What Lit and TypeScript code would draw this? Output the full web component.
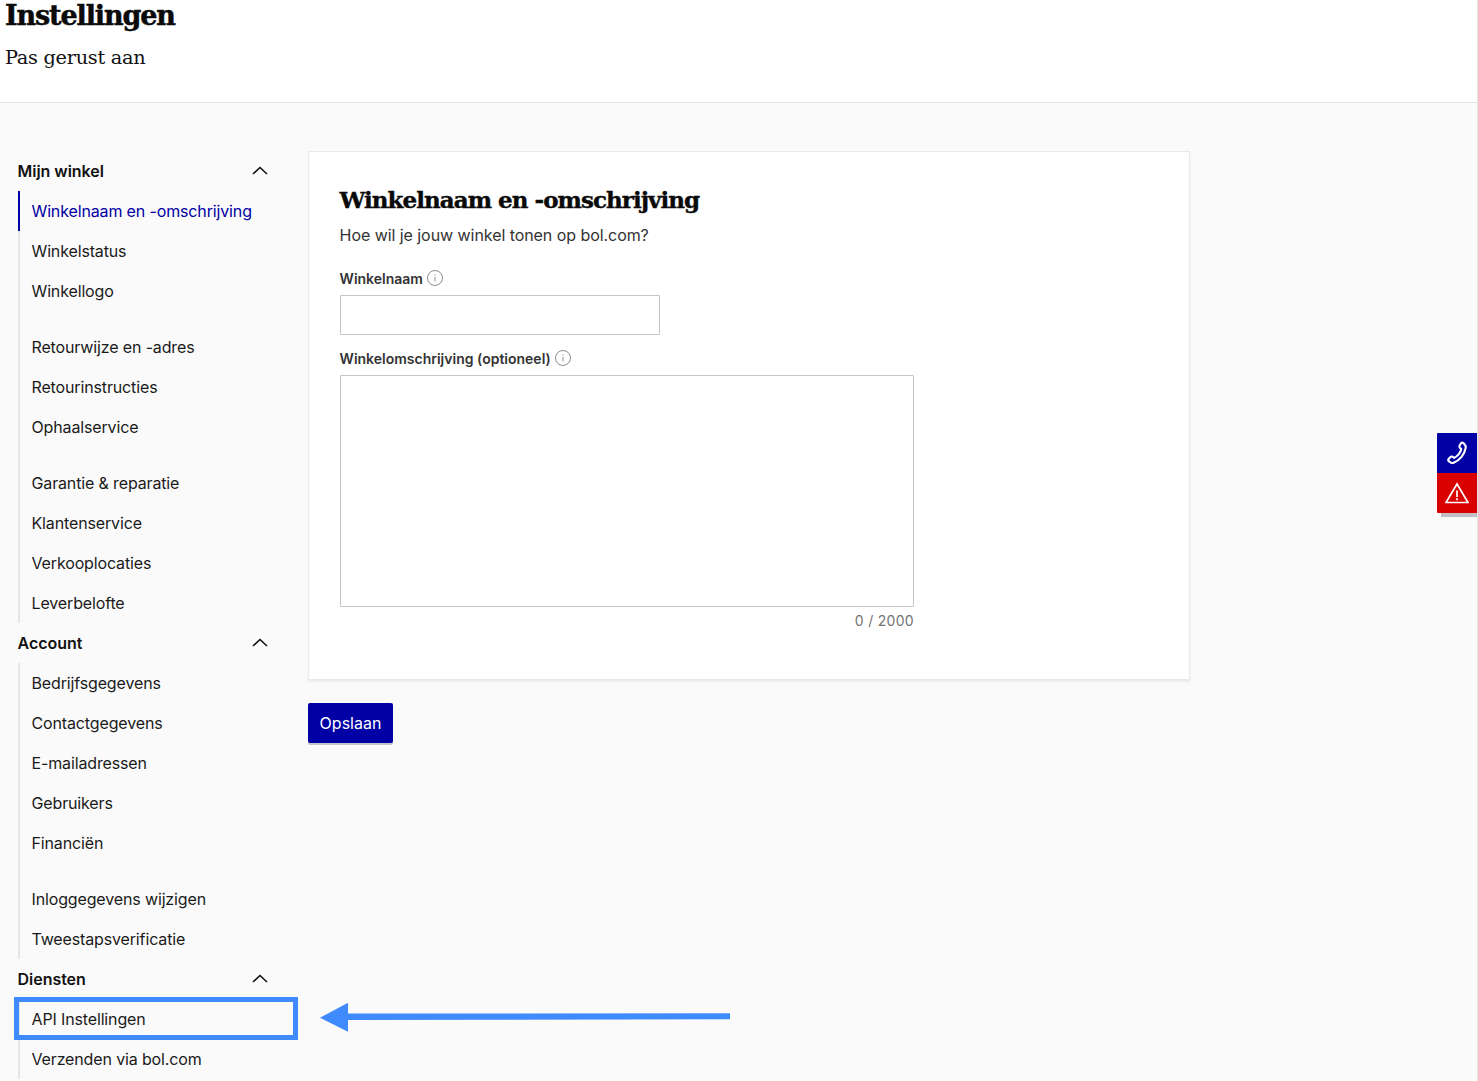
import { LitElement, html, css, svg } from "lit";
import { customElement } from "lit/decorators.js";

const groups = [
  { title: "Mijn winkel", sets: [["Winkelnaam en -omschrijving", "Winkelstatus", "Winkellogo"], ["Retourwijze en -adres", "Retourinstructies", "Ophaalservice"], ["Garantie & reparatie", "Klantenservice", "Verkooplocaties", "Leverbelofte"]] },
  { title: "Account", sets: [["Bedrijfsgegevens", "Contactgegevens", "E-mailadressen", "Gebruikers", "Financiën"], ["Inloggegevens wijzigen", "Tweestapsverificatie"]] },
  { title: "Diensten", sets: [["API Instellingen", "Verzenden via bol.com"]] },
];

const info = html`<svg class="info" viewBox="0 0 16 16" width="16" height="16" fill="none" stroke="#8c8c8c" stroke-width="1"><circle cx="8" cy="8" r="7.5"/><path d="M8 7v4.5M8 4.4v1.2"/></svg>`;
const chevron = svg`<path d="M1 8 L8 1.5 L15 8" fill="none" stroke="#111" stroke-width="1.6"/>`;

@customElement("app-root")
export class AppRoot extends LitElement {
  static styles = css`
    :host { display: block; position: relative; height: 1081px; overflow: hidden; background: #fff; font-family: Inter, "Liberation Sans", sans-serif; color: #111; }
    .page { width: 1477px; height: 1081px; border-right: 1px solid #e4e4e4; background: #fafafa; overflow: hidden; }
    header { background: #fff; border-bottom: 1px solid #e3e3e3; padding: 1px 0 0 5px; height: 101px; }
    h1 { margin: 0; font: 700 27px/30px "DejaVu Serif", serif; letter-spacing: -1.12px; color: #0a0a0a; -webkit-text-stroke: 0.5px #0a0a0a; }
    .sub { margin-top: 12px; font: 400 19.3px/30px "DejaVu Serif", serif; letter-spacing: -0.28px; color: #111; }
    .body { display: flex; padding: 48px 0 0 18px; }
    nav { width: 250px; flex: none; margin-right: 40px; }
    .gt { height: 40px; display: flex; align-items: center; justify-content: space-between; font-size: 16px; font-weight: 600; letter-spacing: -0.05px; color: #111; text-indent: -0.4px; }
    .gt svg { display: block; }
    .rail { border-left: 2px solid #e6e6e6; display: flex; flex-direction: column; gap: 16px; }
    .set { display: flex; flex-direction: column; }
    .item { height: 40px; line-height: 40px; margin-left: -2px; padding-left: 13.5px; font-size: 16px; letter-spacing: -0.14px; color: #1a1a1a; white-space: nowrap; box-sizing: border-box; }
    .item.on { color: #0000a4; border-left: 2px solid #0000a4; padding-left: 11.5px; }
    main { width: 882px; flex: none; }
    .card { height: 529px; box-sizing: border-box; background: #fff; border: 1px solid #e9e9e9; box-shadow: 0 2px 2px rgba(0,0,0,0.06); padding: 31px; }
    h2 { margin: 2px 0 0; font: 700 23px/30px "DejaVu Serif", serif; letter-spacing: -0.96px; color: #0a0a0a; -webkit-text-stroke: 0.4px #0a0a0a; text-indent: -0.4px; }
    .lead { margin-top: 8px; font-size: 16px; line-height: 24px; letter-spacing: -0.06px; color: #333; text-indent: -0.4px; }
    .lab { display: flex; align-items: center; gap: 4px; height: 20px; font-size: 14px; font-weight: 600; letter-spacing: 0; color: #333; text-indent: -0.4px; }
    .lab.first { margin-top: 21px; }
    .lab.second { margin-top: 13px; }
    .info { display: block; }
    .inp { display: block; box-sizing: border-box; width: 320px; height: 40px; margin-top: 7px; background: #fff; border: 1px solid #c4c4c4; border-radius: 1px; }
    .ta { display: block; box-sizing: border-box; width: 574px; height: 232px; margin-top: 7px; background: #fff; border: 1px solid #c4c4c4; border-radius: 1px; }
    .count { width: 574px; text-align: right; margin-top: 4px; font-size: 14px; line-height: 20px; letter-spacing: 0.3px; color: #737373; }
    .save { display: block; margin-top: 23px; width: 85px; height: 40px; padding: 0; border: 0; border-radius: 2px; background: #0000a4; color: #fff; font: 400 16px Inter, "Liberation Sans", sans-serif; box-shadow: 0 2px 0 #c3c3c9; }
    .side { position: absolute; left: 1437px; top: 433px; width: 40px; }
    .side::after { content: ""; position: absolute; left: 4px; right: 0; bottom: -4px; height: 4px; background: #c0c0c6; }
    .sb { height: 40px; display: flex; align-items: center; justify-content: center; }
    .sb.p { background: #0000a4; border-top-left-radius: 1px; }
    .sb.p svg { margin-left: -2px; }
    .sb.r { background: #d90000; border-bottom-left-radius: 1px; }
    .hl { position: absolute; left: 14px; top: 997px; width: 284px; height: 43px; box-sizing: border-box; border: 5px solid #3f8bfd; }
    .arrow { position: absolute; left: 318px; top: 1000px; }
  `;

  render() {
    return html`
      <div class="page">
        <header>
          <h1>Instellingen</h1>
          <div class="sub">Pas gerust aan</div>
        </header>
        <div class="body">
          <nav>
            ${groups.map((g) => html`
              <div class="gt">${g.title}<svg width="16" height="10" viewBox="0 0 16 10">${chevron}</svg></div>
              <div class="rail">
                ${g.sets.map((s) => html`<div class="set">
                  ${s.map((i) => html`<div class="item ${i.startsWith("Winkelnaam") ? "on" : ""}">${i}</div>`)}
                </div>`)}
              </div>
            `)}
          </nav>
          <main>
            <div class="card">
              <h2>Winkelnaam en -omschrijving</h2>
              <div class="lead">Hoe wil je jouw winkel tonen op bol.com?</div>
              <div class="lab first">Winkelnaam ${info}</div>
              <div class="inp"></div>
              <div class="lab second">Winkelomschrijving (optioneel) ${info}</div>
              <div class="ta"></div>
              <div class="count">0 / 2000</div>
            </div>
            <button class="save">Opslaan</button>
          </main>
        </div>
      </div>
      <div class="side">
        <div class="sb p">
          <svg width="26" height="26" viewBox="0 0 22 22" fill="none" stroke="#fff" stroke-width="1.8" stroke-linejoin="round"><path d="M17.2 2.6c-.7-.6-1.6-.4-2.1.3l-1 1.7c-.4.7-.3 1.4.2 2l1.2 1.1c-.4 1.6-1.1 3-2.1 4.3-1.1 1.3-2.4 2.4-3.9 3.1l-1.3-.9c-.7-.4-1.4-.3-2 .3l-1.3 1.4c-.6.7-.5 1.6.2 2.2l.9.7c.9.6 2 .8 3 .4 2.6-1 4.9-2.7 6.7-4.9 1.8-2.2 3-4.8 3.5-7.6.2-1-.1-2.1-.9-2.9z"/></svg>
        </div>
        <div class="sb r">
          <svg width="24" height="24" viewBox="0 0 24 24" fill="none" stroke="#fff" stroke-width="1.7" stroke-linejoin="miter"><path d="M12 3 L23 21.5 H1 Z"/><path d="M12 9.5v6.5M12 17.2v2"/></svg>
        </div>
      </div>
      <div class="hl"></div>
      <svg class="arrow" width="414" height="34" viewBox="0 0 414 34"><path d="M2 17.7 L30 2.7 V13.5 L412 13.3 V19.3 L30 20 V31.7 Z" fill="#3f8bfd"/></svg>
    `;
  }
}
